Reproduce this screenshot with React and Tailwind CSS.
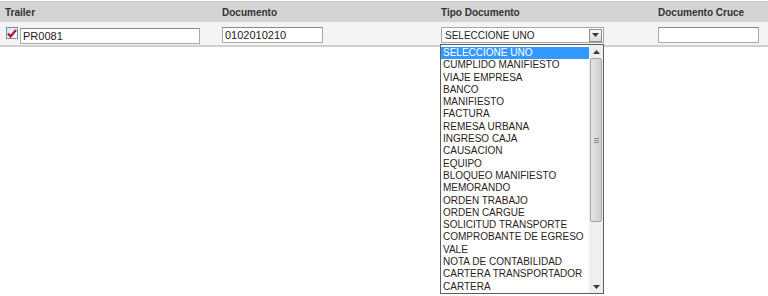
const tipos = [
  "SELECCIONE UNO",
  "CUMPLIDO MANIFIESTO",
  "VIAJE EMPRESA",
  "BANCO",
  "MANIFIESTO",
  "FACTURA",
  "REMESA URBANA",
  "INGRESO CAJA",
  "CAUSACION",
  "EQUIPO",
  "BLOQUEO MANIFIESTO",
  "MEMORANDO",
  "ORDEN TRABAJO",
  "ORDEN CARGUE",
  "SOLICITUD TRANSPORTE",
  "COMPROBANTE DE EGRESO",
  "VALE",
  "NOTA DE CONTABILIDAD",
  "CARTERA TRANSPORTADOR",
  "CARTERA",
];

function Caret({ up = false }) {
  return (
    <svg width="7" height="4" viewBox="0 0 7 4" className={up ? "rotate-180" : ""}>
      <path d="M0 0h7L3.5 4z" fill="#3a3a3a" />
    </svg>
  );
}

function OldCheckbox() {
  return (
    <span className="flex h-[12px] w-[12px] items-center justify-center border border-[#7a8ea8] bg-gradient-to-br from-[#dce4f0] to-[#ffffff]">
      <svg width="10" height="9" viewBox="0 0 10 9">
        <path d="M1 4.5l2.6 3L9 1" fill="none" stroke="#b0142a" strokeWidth="2.2" />
      </svg>
    </span>
  );
}

function TextBox({ value, className }) {
  return (
    <div className={"flex h-[16px] items-center border border-[#a9a9a9] border-t-[#8a8a8a] bg-white pl-[2px] text-[11px] text-[#1a1a1a] " + className}>
      {value}
    </div>
  );
}

export default function App() {
  return (
    <div className="relative h-[296px] w-[768px] overflow-hidden bg-white font-['Liberation_Sans',Arial,sans-serif] text-[10px]">
      <div className="mt-px grid h-[21px] grid-cols-[218px_219px_217px_1fr] items-center border-t border-[#c9c9c9] bg-[#d4d4d4] font-bold text-[#333]">
        <div className="pl-[5px]">Trailer</div>
        <div className="pl-[4px]">Documento</div>
        <div className="pl-[4px]">Tipo Documento</div>
        <div className="pl-[4px]">Documento Cruce</div>
      </div>

      <div className="grid h-[25px] grid-cols-[218px_219px_217px_1fr] items-start border-b-2 border-[#d0d0d0] bg-[#f4f4f4] pt-[5px]">
        <div className="flex items-start gap-[2px] pl-[6px]">
          <OldCheckbox />
          <TextBox value="PR0081" className="mt-px w-[180px]" />
        </div>
        <div className="pl-[4px]">
          <TextBox value="0102010210" className="w-[101px]" />
        </div>
        <div className="relative pl-[4px]">
          <div className="flex h-[16px] w-[163px] items-center justify-between border border-[#a5a5a5] bg-white pl-[3px] pr-px text-[10px] text-[#222]">
            <span>SELECCIONE UNO</span>
            <span className="flex h-[13px] w-[13px] items-center justify-center border border-[#8d8d8d] bg-gradient-to-b from-[#f7f7f7] to-[#dcdcdc]">
              <Caret />
            </span>
          </div>

          <div className="absolute left-[3px] top-[17px] z-10 flex h-[250px] w-[164px] border border-[#5f5f5f] bg-white">
            <div className="w-[148px] pt-[2px]">
              {tipos.map((t, i) => (
                <div
                  key={t}
                  className={
                    "h-[12.3px] whitespace-nowrap pl-[2px] leading-[12.3px] " +
                    (i === 0 ? "bg-[#3399ff] text-white" : "text-[#2b1c1c]")
                  }
                >
                  {t}
                </div>
              ))}
            </div>
            <div className="flex w-[14px] flex-col bg-[#efefef]">
              <div className="flex h-[13px] items-center justify-center">
                <Caret up />
              </div>
              <div className="mx-px flex h-[164px] items-center justify-center rounded-[2px] border border-[#a8a8a8] bg-gradient-to-r from-[#e4e4e4] to-[#cfcfcf]">
                <div className="flex flex-col gap-px">
                  <div className="h-px w-[5px] bg-[#8a8a8a]" />
                  <div className="h-px w-[5px] bg-[#8a8a8a]" />
                  <div className="h-px w-[5px] bg-[#8a8a8a]" />
                </div>
              </div>
              <div className="flex-1" />
              <div className="flex h-[13px] items-center justify-center">
                <Caret />
              </div>
            </div>
          </div>
        </div>
        <div className="pl-[4px]">
          <TextBox value="" className="w-[101px]" />
        </div>
      </div>
    </div>
  );
}
